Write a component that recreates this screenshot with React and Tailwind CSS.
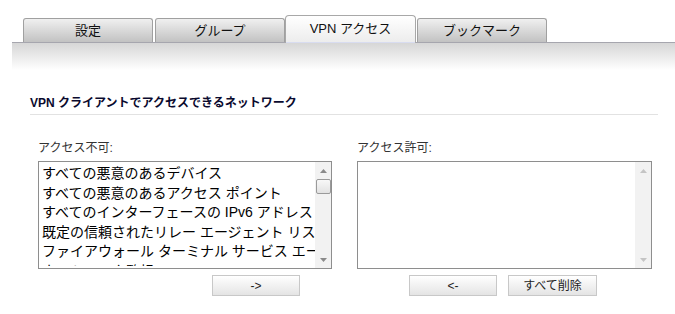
import React from "react";

const font = "font-['Liberation_Sans','Noto_Sans_CJK_JP',sans-serif]";

function Tab({ label, active, className = "" }) {
  if (active) {
    return (
      <div
        className={`relative z-10 -mb-px flex h-[28px] w-[131px] items-center justify-center rounded-t-[4px] border border-b-0 border-[#a8a8a8] bg-gradient-to-b from-white to-[#ececec] text-[13px] text-[#111] ${className}`}
      >
        <span className="pb-[2px]">{label}</span>
        <div className="absolute bottom-0 left-0 right-0 h-px bg-[#d8dcf0]" />
      </div>
    );
  }
  return (
    <div
      className={`flex h-[24px] w-[130px] items-center justify-center rounded-t-[3px] border border-b-0 border-[#a0a0a0] bg-gradient-to-b from-[#f0f0f0] to-[#c2c2c2] text-[13px] text-[#111] ${className}`}
    >
      {label}
    </div>
  );
}

function Arrow({ up, disabled }) {
  return (
    <svg width="7" height="4" viewBox="0 0 7 4">
      <path
        d={up ? "M0 4 L3.5 0 L7 4 Z" : "M0 0 L3.5 4 L7 0 Z"}
        fill={disabled ? "#c4c4c4" : "#8a8a8a"}
      />
    </svg>
  );
}

function ListBox({ items, thumb }) {
  return (
    <div className="flex h-[108px] border border-[#8e8e8e] bg-white">
      <div className="h-[104px] flex-1 self-start overflow-hidden pl-[3px] pt-[2px]">
        {items.map((t, i) => (
          <div
            key={i}
            className="whitespace-nowrap text-[14px] leading-[19.5px] text-black"
          >
            {t}
          </div>
        ))}
      </div>
      <div className="flex w-[16px] flex-col items-center bg-[#f2f2f2]">
        <div className="flex h-[17px] w-full items-center justify-center">
          <Arrow up disabled={!thumb} />
        </div>
        {thumb ? (
          <div className="ml-px h-[15px] w-[15px] rounded-[2px] border border-[#9a9a9a] bg-gradient-to-b from-[#f8f8f8] to-[#e2e2e2]" />
        ) : null}
        <div className="flex-1" />
        <div className="flex h-[17px] w-full items-center justify-center">
          <Arrow disabled={!thumb} />
        </div>
      </div>
    </div>
  );
}

function Btn({ children, className = "" }) {
  return (
    <div
      className={`flex h-[21px] items-center justify-center border border-[#c8c8c8] bg-gradient-to-b from-white to-[#e4e4e4] text-[12px] text-[#222] ${className}`}
    >
      {children}
    </div>
  );
}

export default function App() {
  const items = [
    "すべての悪意のあるデバイス",
    "すべての悪意のあるアクセス ポイント",
    "すべてのインターフェースの IPv6 アドレス",
    "既定の信頼されたリレー エージェント リスト",
    "ファイアウォール ターミナル サービス エージェント",
    "ネットワーク監視",
  ];
  return (
    <div className={`relative h-[314px] w-[675px] overflow-hidden bg-white ${font}`}>
      {/* tabs */}
      <div className="flex h-[42px] items-end pl-[23px]">
        <Tab label="設定" />
        <Tab label="グループ" className="ml-[2px]" />
        <Tab label="VPN アクセス" active />
        <Tab label="ブックマーク" className="ml-px w-[129px]" />
      </div>
      <div className="ml-[12px] h-[28px] border-t border-[#a6a6ae] bg-gradient-to-b from-[#d6d6d6] to-white" />

      {/* heading */}
      <div className="ml-[30px] mt-[25px] w-[628px] border-b border-[#e2e2e2] pb-[3px] text-[12px] font-bold leading-[16px] text-[#0a0a2e]">
        VPN クライアントでアクセスできるネットワーク
      </div>

      {/* columns */}
      <div className="mt-[25px] flex">
        <div className="ml-[38px] w-[294px]">
          <div className="mb-[5px] h-[16px] text-[12px] leading-[16px] text-[#333]">アクセス不可:</div>
          <ListBox items={items} thumb />
          <div className="mt-[6px] flex">
            <Btn className="ml-[174px] w-[88px]">-&gt;</Btn>
          </div>
        </div>
        <div className="ml-[25px] w-[295px]">
          <div className="mb-[5px] h-[16px] text-[12px] leading-[16px] text-[#333]">アクセス許可:</div>
          <ListBox items={[]} />
          <div className="mt-[6px] flex">
            <Btn className="ml-[52px] w-[88px]">&lt;-</Btn>
            <Btn className="ml-[11px] w-[89px]">すべて削除</Btn>
          </div>
        </div>
      </div>
    </div>
  );
}
